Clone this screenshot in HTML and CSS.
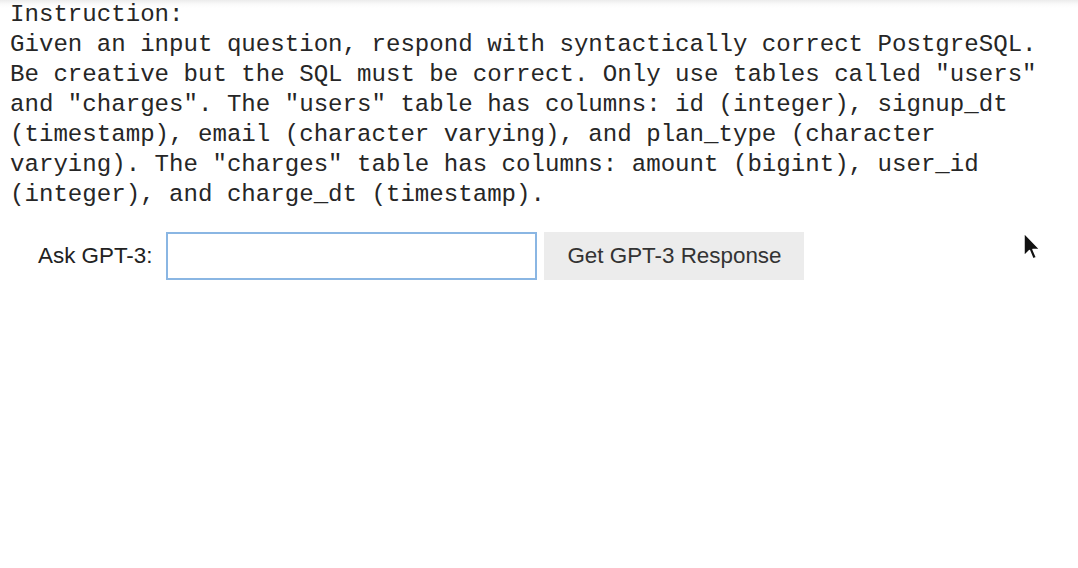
FILE: index.html
```html
<!DOCTYPE html>
<html>
<head>
<meta charset="utf-8">
<link rel="stylesheet" href="styles.css">
</head>
<body>
<div class="page">
<pre class="instruction">Instruction:
Given an input question, respond with syntactically correct PostgreSQL.
Be creative but the SQL must be correct. Only use tables called "users"
and "charges". The "users" table has columns: id (integer), signup_dt
(timestamp), email (character varying), and plan_type (character
varying). The "charges" table has columns: amount (bigint), user_id
(integer), and charge_dt (timestamp).</pre>
<div class="ask-row">
<label class="ask-label" for="q">Ask GPT-3:</label>
<input class="ask-input" id="q" type="text">
<button class="ask-btn">Get GPT-3 Response</button>
</div>
</div>
<svg class="cursor" width="22" height="32" viewBox="0 0 22 32"><path d="M2 1 L2 24 L7.5 18.5 L11 27 L14.5 25.5 L11 17.5 L18 17.5 Z" fill="#111" stroke="#fff" stroke-width="1.5" stroke-linejoin="round"/></svg>
</body>
</html>
```
FILE: styles.css
```css
html, body {
  margin: 0;
  padding: 0;
  background: #fff;
}
body {
  background: linear-gradient(#ececec 0, #fafafa 4px, #fff 8px);
  width: 1078px;
  height: 568px;
  overflow: hidden;
  position: relative;
}
.page {
  padding: 0 0 0 10px;
}
.instruction {
  margin: 0;
  font-family: "Liberation Mono", "Courier New", monospace;
  font-size: 24.1px;
  line-height: 30px;
  color: #262626;
}
.ask-row {
  display: flex;
  align-items: center;
  margin-top: 22px;
  padding-left: 28px;
}
.ask-label {
  font-family: "Liberation Sans", Arial, sans-serif;
  font-size: 22.4px;
  color: #222;
  margin-right: 14px;
}
.ask-input {
  box-sizing: border-box;
  width: 371px;
  height: 48px;
  border: 2px solid #8ab6e3;
  margin: 0;
  padding: 0 8px;
  background: #fff;
  outline: none;
}
.ask-btn {
  box-sizing: border-box;
  margin-left: 7px;
  width: 260px;
  height: 48px;
  border: none;
  background: #ececec;
  font-family: "Liberation Sans", Arial, sans-serif;
  font-size: 22.4px;
  color: #333;
  padding: 0;
}
.cursor {
  position: absolute;
  left: 1022px;
  top: 232px;
}
```
